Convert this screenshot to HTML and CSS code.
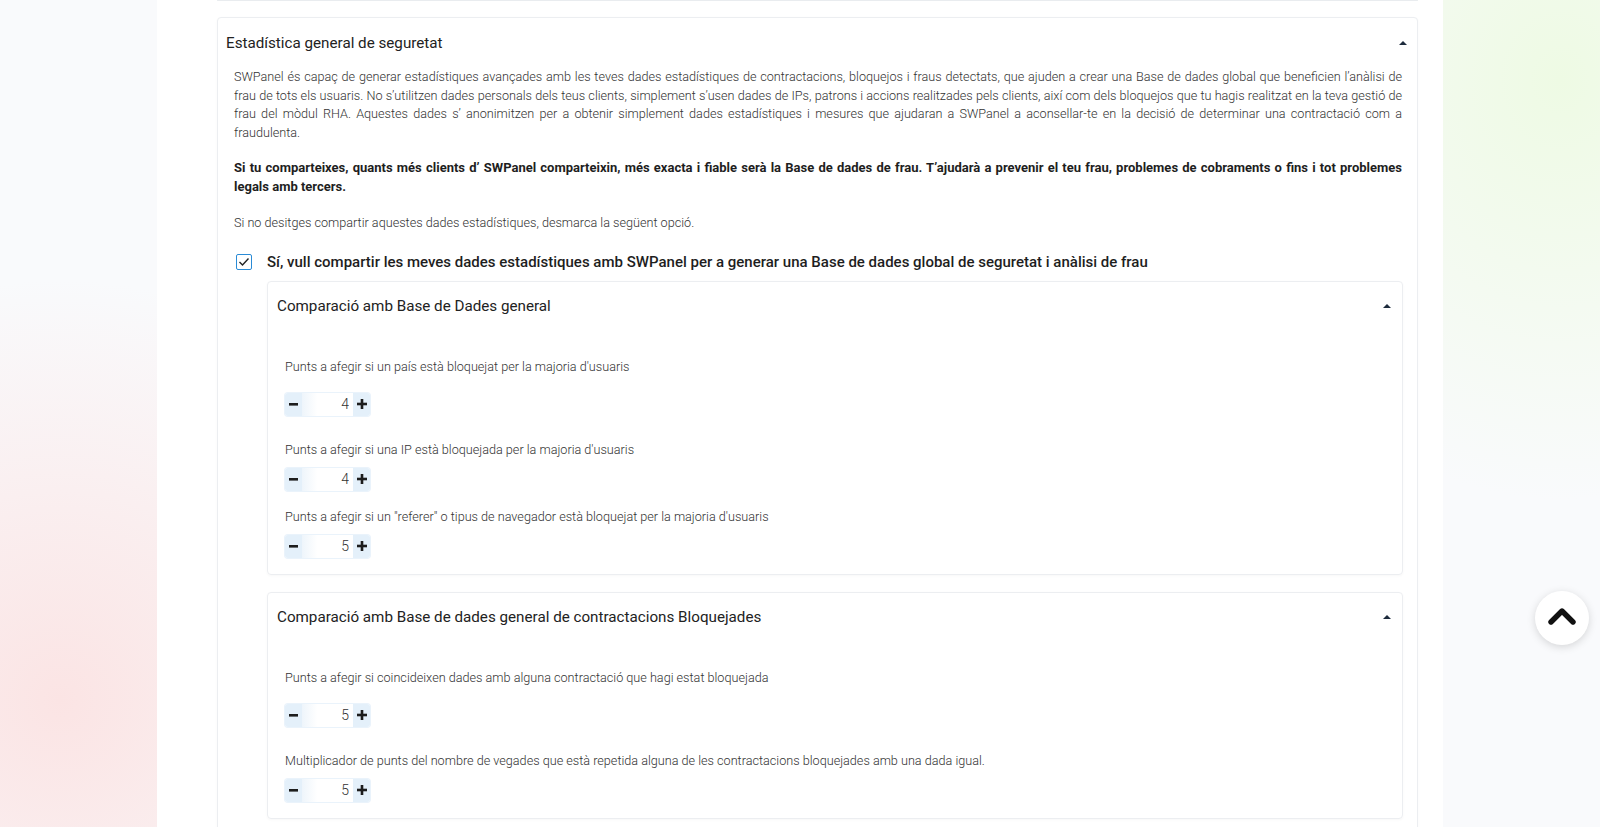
FILE: index.html
```html
<!DOCTYPE html>
<html lang="ca">
<head>
    <meta charset="UTF-8">
    <meta name="viewport" content="width=device-width, initial-scale=1.0">
    <title>SWPanel - Seguretat</title>
    <link rel="stylesheet" href="styles.css">
</head>
<body>
    <div class="panel">
        <div class="card-end"></div>

        <!-- Estadística general -->
        <div class="card">
            <div class="card-header">
                <span class="card-title">Estadística general de seguretat</span>
                <span class="caret"></span>
            </div>
            <div class="card-body">
                <p class="text">SWPanel és capaç de generar estadístiques avançades amb les teves dades estadístiques de contractacions, bloquejos i fraus detectats, que ajuden a crear una Base de dades global que beneficien l’anàlisi de frau de tots els usuaris. No s’utilitzen dades personals dels teus clients, simplement s’usen dades de IPs, patrons i accions realitzades pels clients, així com dels bloquejos que tu hagis realitzat en la teva gestió de frau del mòdul RHA. Aquestes dades s’ anonimitzen per a obtenir simplement dades estadístiques i mesures que ajudaran a SWPanel a aconsellar-te en la decisió de determinar una contractació com a fraudulenta.</p>
                <p class="text strong">Si tu comparteixes, quants més clients d’ SWPanel comparteixin, més exacta i fiable serà la Base de dades de frau. T’ajudarà a prevenir el teu frau, problemes de cobraments o fins i tot problemes legals amb tercers.</p>
                <p class="text">Si no desitges compartir aquestes dades estadístiques, desmarca la següent opció.</p>

                <label class="check-row">
                    <span class="checkbox">
                        <svg width="12" height="10" viewBox="0 0 12 10"><polyline points="1.5,5 4.5,8 10.5,1.5" fill="none" stroke="#222" stroke-width="1.4"/></svg>
                    </span>
                    <span class="check-label">Sí, vull compartir les meves dades estadístiques amb SWPanel per a generar una Base de dades global de seguretat i anàlisi de frau</span>
                </label>

                <div class="sub-card">
                    <div class="sub-header">
                        <span class="sub-title">Comparació amb Base de Dades general</span>
                        <span class="caret"></span>
                    </div>
                    <div class="sub-body">
                        <div class="field">
                            <div class="field-label first">Punts a afegir si un país està bloquejat per la majoria d'usuaris</div>
                            <div class="stepper">
                                <button class="step-btn minus"><svg width="9" height="3" viewBox="0 0 9 3"><rect width="9" height="2.6" fill="#1d1d1d"/></svg></button>
                                <input class="step-input" type="text" value="4">
                                <button class="step-btn plus"><svg width="10" height="10" viewBox="0 0 10 10"><rect x="0" y="3.7" width="10" height="2.6" fill="#1d1d1d"/><rect x="3.7" y="0" width="2.6" height="10" fill="#1d1d1d"/></svg></button>
                            </div>
                        </div>
                        <div class="field wide">
                            <div class="field-label">Punts a afegir si una IP està bloquejada per la majoria d'usuaris</div>
                            <div class="stepper">
                                <button class="step-btn minus"><svg width="9" height="3" viewBox="0 0 9 3"><rect width="9" height="2.6" fill="#1d1d1d"/></svg></button>
                                <input class="step-input" type="text" value="4">
                                <button class="step-btn plus"><svg width="10" height="10" viewBox="0 0 10 10"><rect x="0" y="3.7" width="10" height="2.6" fill="#1d1d1d"/><rect x="3.7" y="0" width="2.6" height="10" fill="#1d1d1d"/></svg></button>
                            </div>
                        </div>
                        <div class="field">
                            <div class="field-label">Punts a afegir si un "referer" o tipus de navegador està bloquejat per la majoria d'usuaris</div>
                            <div class="stepper">
                                <button class="step-btn minus"><svg width="9" height="3" viewBox="0 0 9 3"><rect width="9" height="2.6" fill="#1d1d1d"/></svg></button>
                                <input class="step-input" type="text" value="5">
                                <button class="step-btn plus"><svg width="10" height="10" viewBox="0 0 10 10"><rect x="0" y="3.7" width="10" height="2.6" fill="#1d1d1d"/><rect x="3.7" y="0" width="2.6" height="10" fill="#1d1d1d"/></svg></button>
                            </div>
                        </div>
                    </div>
                </div>

                <div class="sub-card">
                    <div class="sub-header">
                        <span class="sub-title">Comparació amb Base de dades general de contractacions Bloquejades</span>
                        <span class="caret"></span>
                    </div>
                    <div class="sub-body">
                        <div class="field">
                            <div class="field-label first">Punts a afegir si coincideixen dades amb alguna contractació que hagi estat bloquejada</div>
                            <div class="stepper">
                                <button class="step-btn minus"><svg width="9" height="3" viewBox="0 0 9 3"><rect width="9" height="2.6" fill="#1d1d1d"/></svg></button>
                                <input class="step-input" type="text" value="5">
                                <button class="step-btn plus"><svg width="10" height="10" viewBox="0 0 10 10"><rect x="0" y="3.7" width="10" height="2.6" fill="#1d1d1d"/><rect x="3.7" y="0" width="2.6" height="10" fill="#1d1d1d"/></svg></button>
                            </div>
                        </div>
                        <div class="field wide">
                            <div class="field-label">Multiplicador de punts del nombre de vegades que està repetida alguna de les contractacions bloquejades amb una dada igual.</div>
                            <div class="stepper">
                                <button class="step-btn minus"><svg width="9" height="3" viewBox="0 0 9 3"><rect width="9" height="2.6" fill="#1d1d1d"/></svg></button>
                                <input class="step-input" type="text" value="5">
                                <button class="step-btn plus"><svg width="10" height="10" viewBox="0 0 10 10"><rect x="0" y="3.7" width="10" height="2.6" fill="#1d1d1d"/><rect x="3.7" y="0" width="2.6" height="10" fill="#1d1d1d"/></svg></button>
                            </div>
                        </div>
                    </div>
                </div>
            </div>
        </div>
    </div>

    <!-- Tornar a dalt -->
    <button class="to-top" aria-label="Amunt">
        <svg width="28" height="18" viewBox="0 0 28 18"><polyline points="3,15 14,4 25,15" fill="none" stroke="#111" stroke-width="5.4" stroke-linejoin="round" stroke-linecap="round"/></svg>
    </button>
</body>
</html>
```

FILE: styles.css
```css
html, body {
    margin: 0;
    height: 100%;
}
body {
    font-family: Roboto, "Liberation Sans", sans-serif;
    color: #333;
    background:
        radial-gradient(ellipse 420px 420px at 60px 700px, #fbe4e4 0%, rgba(251,228,228,0) 100%),
        radial-gradient(ellipse 360px 420px at 1560px 80px, #eefae4 0%, rgba(238,250,228,0) 100%),
        #f9fafc;
    overflow: hidden;
}
.panel {
    width: 1286px;
    box-sizing: border-box;
    margin: 0 auto;
    padding: 0 25px 0 60px;
    min-height: 100%;
    background: #fff;
}
.card-end {
    height: 0;
    border: 1px solid #e9ecef;
    border-top: none;
    border-radius: 0 0 4px 4px;
    margin-bottom: 16px;
}
.card {
    border: 1px solid #eceef1;
    border-radius: 4px;
    box-shadow: 0 1px 3px rgba(0,0,0,0.03);
    background: #fff;
}
.card-header {
    display: flex;
    align-items: center;
    justify-content: space-between;
    padding: 15px 10px 15px 8px;
    line-height: 20px;
}
.card-title {
    font-size: 15.2px;
    color: #222;
}
.caret {
    width: 0;
    height: 0;
    border-left: 4px solid transparent;
    border-right: 4px solid transparent;
    border-bottom: 4px solid #1d2b3c;
}
.card-body {
    padding: 0 15px 40px 16px;
}
.text {
    margin: 0 0 17px;
    font-size: 12.65px;
    font-weight: 300;
    line-height: 18.5px;
    color: #333;
    text-align: justify;
}
.text.strong {
    margin-bottom: 18px;
    font-size: 13px;
    font-weight: 700;
    color: #1e1e1e;
}
.check-row {
    display: flex;
    align-items: center;
    gap: 15px;
    margin: 0 0 7px 2px;
    line-height: 24px;
    cursor: pointer;
}
.checkbox {
    width: 14px;
    height: 14px;
    border: 1px solid #2a8bd6;
    border-radius: 2px;
    display: flex;
    align-items: center;
    justify-content: center;
    flex-shrink: 0;
}
.check-label {
    font-size: 15px;
    font-weight: 500;
    color: #1e1e1e;
}
.sub-card {
    margin: 0 -1px 17px 33px;
    border: 1px solid #eceef1;
    border-radius: 4px;
    box-shadow: 0 1px 3px rgba(0,0,0,0.03);
}
.sub-header {
    display: flex;
    align-items: center;
    justify-content: space-between;
    padding: 14px 11px 13px 9px;
    line-height: 20px;
}
.sub-title {
    font-size: 15.2px;
    color: #222;
}
.sub-body {
    padding: 29px 17px 16px 17px;
}
.field + .field {
    margin-top: 17px;
}
.field.wide {
    margin-top: 25px;
}
.field-label {
    font-size: 12.65px;
    font-weight: 300;
    line-height: 18px;
    color: #333;
    margin-bottom: 9px;
}
.field-label.first {
    margin-bottom: 17px;
}
.stepper {
    display: flex;
    width: fit-content;
    height: 23px;
    border-radius: 3px;
    overflow: hidden;
    box-shadow: 0 0 0 1px #eaf3fb;
}
.step-btn {
    width: 17px;
    height: 23px;
    padding: 0;
    border: none;
    background: #e4f0fa;
    display: flex;
    align-items: center;
    justify-content: center;
    cursor: pointer;
}
.step-input {
    width: 51px;
    height: 23px;
    box-sizing: border-box;
    border: none;
    padding: 0 4px 0 0;
    text-align: right;
    font-family: Roboto, "Liberation Sans", sans-serif;
    font-size: 14px;
    font-weight: 300;
    color: #333;
    background: linear-gradient(to right, #eef5fb 0%, #fff 30%);
}
.to-top {
    position: fixed;
    right: 11px;
    bottom: 182px;
    width: 54px;
    height: 54px;
    border-radius: 50%;
    border: none;
    background: #fff;
    box-shadow: 0 2px 8px rgba(0,0,0,0.15);
    display: flex;
    align-items: center;
    justify-content: center;
    padding: 0 0 4px;
    cursor: pointer;
}
```
